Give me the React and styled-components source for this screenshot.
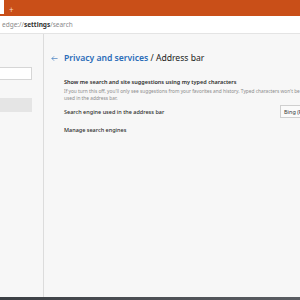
import React from "react";
import styled, { createGlobalStyle } from "styled-components";

const Global = createGlobalStyle`
  html, body { margin: 0; padding: 0; }
  body { width: 300px; height: 300px; overflow: hidden; font-family: "Noto Sans", "Open Sans", sans-serif; }
`;

const Page = styled.div`
  width: 300px;
  height: 300px;
  display: flex;
  flex-direction: column;
  background: #f7f7f7;
`;

const TitleBar = styled.div`
  height: 16px;
  background: #c94f18;
  display: flex;
  align-items: flex-start;
  flex-shrink: 0;
`;

const Tab = styled.div`
  width: 4px;
  height: 14px;
  background: #ffffff;
`;

const NewTab = styled.span`
  margin-left: 5px;
  margin-top: 6px;
  color: #f6d7c6;
  font-size: 8px;
  line-height: 8px;
`;

const AddressBar = styled.div`
  height: 17px;
  background: #ffffff;
  border-bottom: 1px solid #e4e4e4;
  display: flex;
  align-items: center;
  padding: 0 0 0 2px;
  font-size: 6.5px;
  color: #8a8a8a;
  flex-shrink: 0;
  b { color: #333; font-weight: 700; }
`;

const Body = styled.div`
  flex: 1;
  display: flex;
  min-height: 0;
`;

const Sidebar = styled.div`
  width: 43px;
  border-right: 1px solid #dcdcdc;
  padding-top: 33px;
  display: flex;
  flex-direction: column;
  gap: 18px;
  flex-shrink: 0;
`;

const SearchBox = styled.div`
  width: 32px;
  height: 13px;
  background: #ffffff;
  border: 1px solid #d6d6d6;
  border-left: none;
  box-sizing: border-box;
`;

const NavItem = styled.div`
  width: 32px;
  height: 14px;
  background: ${(p) => (p.$active ? "#e5e5e5" : "transparent")};
`;

const Main = styled.div`
  flex: 1;
  padding: 18px 0 0 7px;
  overflow: hidden;
`;

const Header = styled.div`
  display: flex;
  align-items: center;
  gap: 6px;
  height: 12px;
`;

const Title = styled.h1`
  margin: 0;
  font-size: 8.6px;
  font-weight: 400;
  color: #222;
  white-space: nowrap;
  span { color: #2a6cb8; font-weight: 600; }
`;

const Section = styled.div`
  padding-left: 13px;
  margin-top: 14px;
`;

const Label = styled.div`
  font-size: 5.5px;
  font-weight: 600;
  color: #2b2b2b;
  white-space: nowrap;
  line-height: 8px;
`;

const Description = styled.div`
  font-size: 4.8px;
  color: #8c8c8c;
  line-height: 7px;
  white-space: nowrap;
  margin-top: 2px;
`;

const Row = styled.div`
  display: flex;
  align-items: center;
  justify-content: space-between;
  height: 15px;
  margin-top: ${(p) => p.$mt || 0}px;
`;

const RowLabel = styled.div`
  font-size: 5.5px;
  font-weight: 500;
  color: #2b2b2b;
  white-space: nowrap;
`;

const Select = styled.div`
  width: 26px;
  height: 13px;
  box-sizing: border-box;
  border: 1px solid #cfcfcf;
  background: #fafafa;
  font-size: 5.5px;
  color: #333;
  display: flex;
  align-items: center;
  padding-left: 3px;
  margin-right: -6px;
  white-space: nowrap;
  overflow: hidden;
`;

const Taskbar = styled.div`
  height: 3px;
  flex-shrink: 0;
  background: linear-gradient(90deg, #3b3f44 0%, #4a4d52 40%, #5a5d62 100%);
`;

export default function App() {
  return (
    <>
      <Global />
      <Page>
        <TitleBar>
          <Tab />
          <NewTab>+</NewTab>
        </TitleBar>
        <AddressBar>
          edge://<b>settings</b>/search
        </AddressBar>
        <Body>
          <Sidebar>
            <SearchBox />
            <NavItem $active />
          </Sidebar>
          <Main>
            <Header>
              <svg width="7" height="7" viewBox="0 0 16 16" fill="none" stroke="#2a6cb8" strokeWidth="1.4">
                <path d="M15 8H2M7 3L2 8l5 5" />
              </svg>
              <Title>
                <span>Privacy and services</span> / Address bar
              </Title>
            </Header>
            <Section>
              <Label>Show me search and site suggestions using my typed characters</Label>
              <Description>
                If you turn this off, you'll only see suggestions from your favorites and history. Typed characters won't be
                <br />
                used in the address bar.
              </Description>
              <Row $mt={2}>
                <RowLabel>Search engine used in the address bar</RowLabel>
                <Select>Bing (Recommended)</Select>
              </Row>
              <Row $mt={3}>
                <RowLabel>Manage search engines</RowLabel>
              </Row>
            </Section>
          </Main>
        </Body>
        <Taskbar />
      </Page>
    </>
  );
}
